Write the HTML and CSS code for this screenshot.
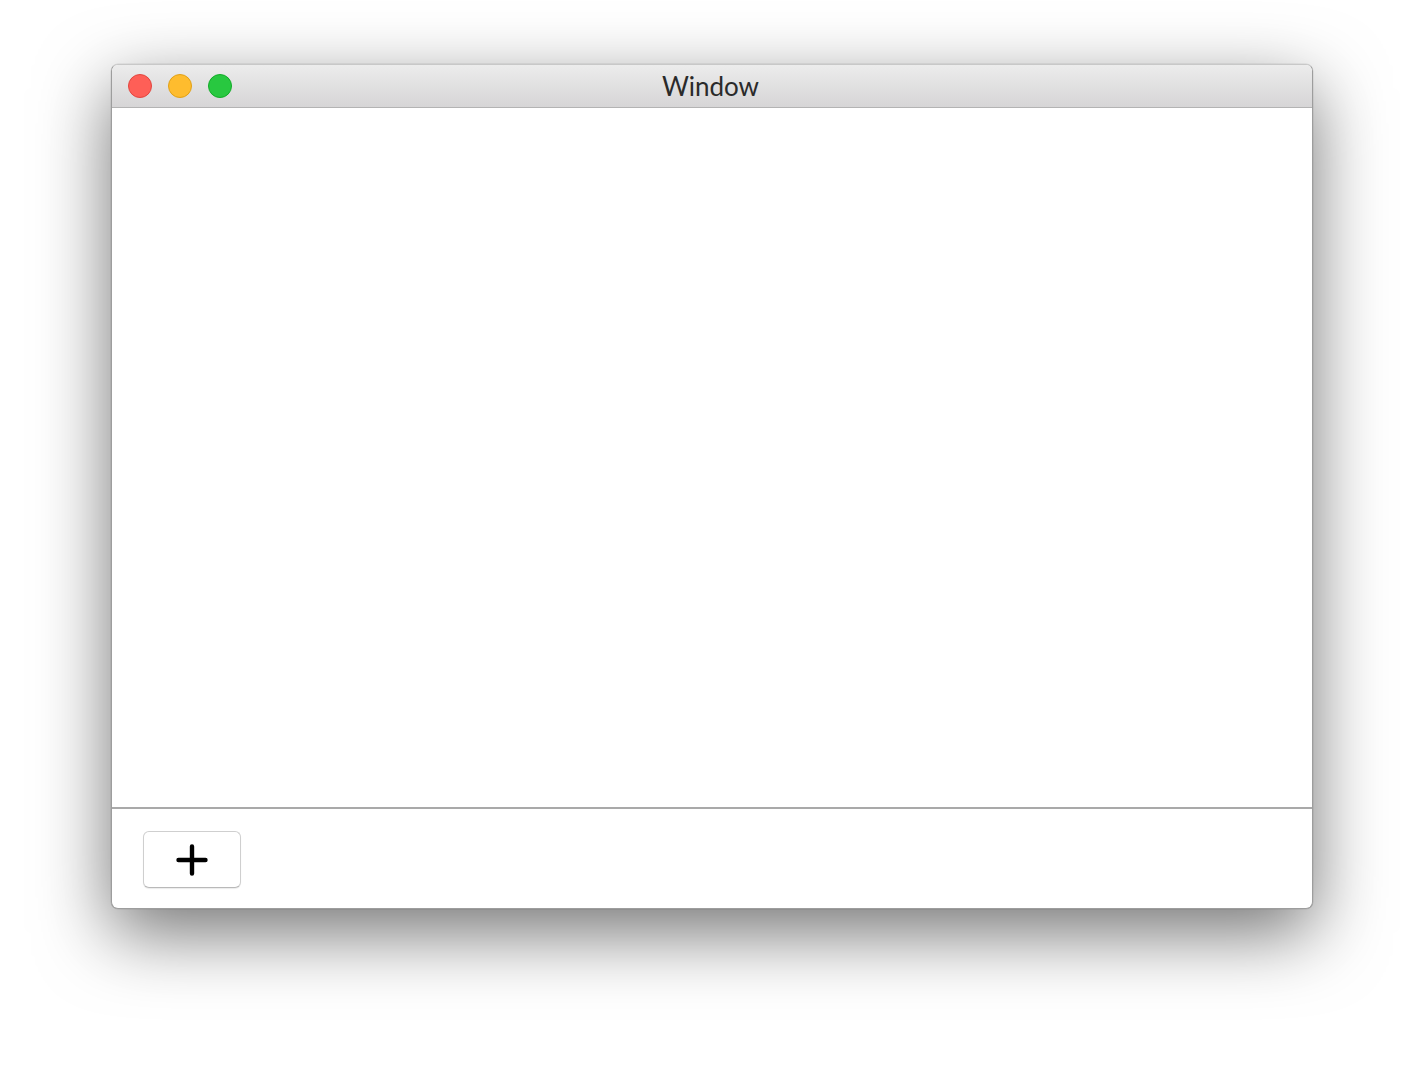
FILE: index.html
```html
<!DOCTYPE html>
<html>
<head>
<meta charset="utf-8">
<link rel="stylesheet" href="styles.css">
</head>
<body>
<div class="stage">
  <div class="window">
    <div class="titlebar">
      <div class="lights">
        <span class="light red"></span>
        <span class="light yellow"></span>
        <span class="light green"></span>
      </div>
      <div class="title">Window</div>
    </div>
    <div class="content"></div>
    <div class="footer">
      <button class="add-btn" aria-label="Add">
        <svg width="32" height="32" viewBox="0 0 32 32"><path d="M16 2.5V29.5M2.5 16H29.5" stroke="#000" stroke-width="4.4" stroke-linecap="round"/></svg>
      </button>
    </div>
  </div>
</div>
</body>
</html>
```
FILE: styles.css
```css
html, body { margin: 0; padding: 0; background: #fff; }
body { font-family: "Lato", "Liberation Sans", sans-serif; }
.stage { padding: 64px 0 0 111px; min-height: 1068px; box-sizing: border-box; }
.window {
  width: 1202px;
  height: 845px;
  box-sizing: border-box;
  border: 1px solid #9d9d9d;
  border-top-color: #c8c8c8;
  border-radius: 7px;
  background: #fff;
  display: flex;
  flex-direction: column;
  overflow: hidden;
  box-shadow: 0 24px 72px rgba(0,0,0,0.55), 0 0 0 0.5px rgba(0,0,0,0.1);
}
.titlebar {
  position: relative;
  height: 42px;
  flex: none;
  background: linear-gradient(#ececec, #d6d5d6);
  border-bottom: 1px solid #b3b3b3;
  display: flex;
  align-items: center;
}
.lights { display: flex; gap: 16px; padding-left: 16px; }
.light { width: 24px; height: 24px; border-radius: 50%; box-sizing: border-box; }
.red { background: #fe5f57; border: 1px solid #e2463f; }
.yellow { background: #febc2e; border: 1px solid #e1a116; }
.green { background: #28c840; border: 1px solid #12ac28; }
.title {
  position: absolute;
  left: 0; right: 0; top: 0; bottom: 0;
  display: flex; align-items: center; justify-content: center;
  font-size: 26px;
  color: #2a2a2a;
  pointer-events: none;
  padding-right: 3px;
}
.content { flex: 1; border-bottom: 2px solid #a9a9a9; }
.footer { height: 99px; flex: none; padding: 22px 0 0 31px; box-sizing: border-box; }
.add-btn {
  width: 98px; height: 57px;
  background: #fff;
  border: 1px solid #cfcfcf;
  border-bottom-color: #b9b9b9;
  border-radius: 6px;
  box-shadow: 0 1px 1px rgba(0,0,0,0.08);
  display: flex; align-items: center; justify-content: center;
  padding: 0;
}
```
